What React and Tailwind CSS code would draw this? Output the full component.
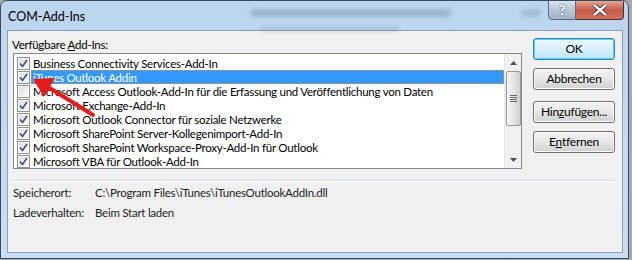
import React from "react";

const addIns = [
  { name: "Business Connectivity Services-Add-In", checked: true },
  { name: "iTunes Outlook Addin", checked: true, selected: true },
  { name: "Microsoft Access Outlook-Add-In für die Erfassung und Veröffentlichung von Daten", checked: false },
  { name: "Microsoft Exchange-Add-In", checked: true },
  { name: "Microsoft Outlook Connector für soziale Netzwerke", checked: true },
  { name: "Microsoft SharePoint Server-Kollegenimport-Add-In", checked: true },
  { name: "Microsoft SharePoint Workspace-Proxy-Add-In für Outlook", checked: true },
  { name: "Microsoft VBA für Outlook-Add-In", checked: true },
];

function Checkbox({ checked }) {
  return (
    <div className="w-[13px] h-[13px] shrink-0 border border-[#8e8f8f] bg-white p-[1px]">
      <div className="w-full h-full bg-gradient-to-br from-[#dcdcdc] to-[#fbfbfb] flex items-center justify-center">
        {checked && (
          <svg width="9" height="9" viewBox="0 0 9 9">
            <path d="M1 4.5 L3.5 7.5 L8 1" fill="none" stroke="#3c4f8a" strokeWidth="1.6" />
          </svg>
        )}
      </div>
    </div>
  );
}

function Row({ item }) {
  return (
    <div className="h-[14px] flex items-center pl-[3px]">
      <Checkbox checked={item.checked} />
      <div
        className={
          item.selected
            ? "ml-[1px] flex-1 h-[14px] flex items-center pl-[1px] bg-[#3399ff] text-white border border-dotted border-[#e08a3c]"
            : "ml-[1px] flex-1 h-[14px] flex items-center pl-[2px] text-black"
        }
      >
        <span className="whitespace-nowrap leading-[13px]">{item.name}</span>
      </div>
    </div>
  );
}

function Scrollbar() {
  return (
    <div className="w-[17px] h-full bg-[#f0f0f0] border-l border-[#e6e6e6] flex flex-col items-center">
      <div className="h-[17px] w-full flex items-center justify-center">
        <svg width="7" height="4" viewBox="0 0 7 4"><path d="M0 4 L3.5 0 L7 4Z" fill="#505050" /></svg>
      </div>
      <div className="w-[15px] h-[55px] rounded-[2px] border border-[#9a9a9a] bg-gradient-to-r from-[#f4f4f4] via-[#e6e6e6] to-[#cfcfcf] flex flex-col items-center justify-center gap-[1px]">
        <div className="w-[7px] h-[1px] bg-[#6a6a6a]" />
        <div className="w-[7px] h-[1px] bg-[#6a6a6a]" />
        <div className="w-[7px] h-[1px] bg-[#6a6a6a]" />
        <div className="w-[7px] h-[1px] bg-[#6a6a6a]" />
      </div>
      <div className="flex-1" />
      <div className="h-[17px] w-full flex items-center justify-center">
        <svg width="7" height="4" viewBox="0 0 7 4"><path d="M0 0 L3.5 4 L7 0Z" fill="#505050" /></svg>
      </div>
    </div>
  );
}

function Button({ children, primary }) {
  return (
    <button
      className={
        primary
          ? "w-[82px] h-[22px] rounded-[3px] border border-[#3c7fb1] p-[1px] shadow-[inset_0_0_0_1px_#48d4f8]"
          : "w-[82px] h-[22px] rounded-[3px] border border-[#707070] p-[1px] shadow-[inset_0_0_0_1px_#fbfbfb]"
      }
    >
      <div
        className={
          primary
            ? "w-full h-full rounded-[2px] bg-gradient-to-b from-[#eaf6fd] via-[#d9f0fc] to-[#bee6fd] flex items-center justify-center text-black text-[12px]"
            : "w-full h-full rounded-[2px] bg-gradient-to-b from-[#f2f2f2] via-[#e6e6e6] to-[#d2d2d2] flex items-center justify-center text-black text-[12px]"
        }
      >
        {children}
      </div>
    </button>
  );
}

export default function App() {
  return (
    <div
      className="relative w-[632px] h-[260px] overflow-hidden bg-[#a8a8a8] text-[11.5px] tracking-[-0.25px]"
      style={{ fontFamily: 'Lato, "Noto Sans", sans-serif' }}
    >
      {/* Window */}
      <div className="w-[629px] h-[259px] rounded-t-[7px] border border-[#3a4b5e] bg-gradient-to-b from-[#bcd5ee] to-[#c9def3] flex flex-col overflow-hidden">
        {/* Title bar */}
        <div className="relative h-[29px] flex items-start justify-between shrink-0">
          <div className="absolute left-[250px] top-[8px] w-[200px] h-[8px] rounded bg-[#6f8197] opacity-40 blur-[2px]" />
          <div className="absolute left-[258px] top-[26px] w-[140px] h-[4px] rounded bg-[#6f8197] opacity-30 blur-[2px]" />
          <div className="absolute left-[520px] top-[8px] w-[20px] h-[8px] rounded bg-[#6f8197] opacity-30 blur-[2px]" />
          <div className="relative pl-[7px] pt-[8px] text-[12.5px] leading-[16px] text-black tracking-normal">COM-Add-Ins</div>
          <div className="relative flex mr-[4px] -mt-[1px]">
            <div className="w-[28px] h-[20px] rounded-bl-[4px] border border-[#5b6c80] bg-gradient-to-b from-[#d9e4ee] via-[#b5c5d4] to-[#a2b4c6] flex items-center justify-center text-white font-bold text-[14px] leading-none [text-shadow:0_0_2px_#27364a]">
              ?
            </div>
            <div className="w-[48px] h-[20px] rounded-br-[4px] border border-l-0 border-[#5a2a2a] bg-gradient-to-b from-[#e3a696] via-[#c75a48] to-[#d2705c] flex items-center justify-center">
              <svg width="16" height="12" viewBox="0 0 16 12">
                <path d="M2 1 L14 11 M14 1 L2 11" stroke="#3a2020" strokeWidth="4" />
                <path d="M2 1 L14 11 M14 1 L2 11" stroke="#ffffff" strokeWidth="2.4" />
              </svg>
            </div>
          </div>
        </div>

        {/* Client */}
        <div className="mx-[6px] mr-[5px] h-[223px] border border-[#8aa1ba] bg-[#f0f0f0] flex flex-col">
          <div className="flex pt-[6px]">
            <div className="pl-[5px] w-[514px]">
              <div className="-ml-[1px] h-[15px] leading-[15px] text-black">
                Verfügbare <span className="underline">A</span>dd-Ins:
              </div>
              <div className="mt-[1px] w-[509px] h-[116px] border border-[#828790] bg-white flex">
                <div className="flex-1 pt-[2px] overflow-hidden">
                  {addIns.map((a) => (
                    <Row key={a.name} item={a} />
                  ))}
                </div>
                <Scrollbar />
              </div>
            </div>
            <div className="ml-[11px] pt-[1px] flex flex-col">
              <Button primary>OK</Button>
              <div className="mt-[8px]"><Button>Abbrechen</Button></div>
              <div className="mt-[11px]">
                <Button>
                  Hin<span className="underline">z</span>ufügen...
                </Button>
              </div>
              <div className="mt-[8px]">
                <Button>
                  E<span className="underline">n</span>tfernen
                </Button>
              </div>
            </div>
          </div>

          <div className="ml-[5px] mr-[5px] mt-[11px] h-[2px] border-t border-[#d5dfe5] border-b border-b-white" />

          <div className="pl-[5px] mt-[3px] flex h-[15px] leading-[15px] text-[#1e1e1e]">
            <div className="w-[82px]">Speicherort:</div>
            <div>C:\Program Files\iTunes\iTunesOutlookAddIn.dll</div>
          </div>
          <div className="pl-[5px] mt-[5px] flex h-[15px] leading-[15px] text-[#1e1e1e]">
            <div className="w-[82px]">Ladeverhalten:</div>
            <div>Beim Start laden</div>
          </div>
        </div>
      </div>

      {/* Red annotation arrow */}
      <svg className="absolute left-0 top-0 pointer-events-none" width="632" height="260">
        <line x1="93" y1="115" x2="48" y2="87" stroke="#e41c1c" strokeWidth="4" strokeLinecap="round" />
        <path d="M33 79 L55 78 L44 97 Z" fill="#e41c1c" />
      </svg>
    </div>
  );
}
